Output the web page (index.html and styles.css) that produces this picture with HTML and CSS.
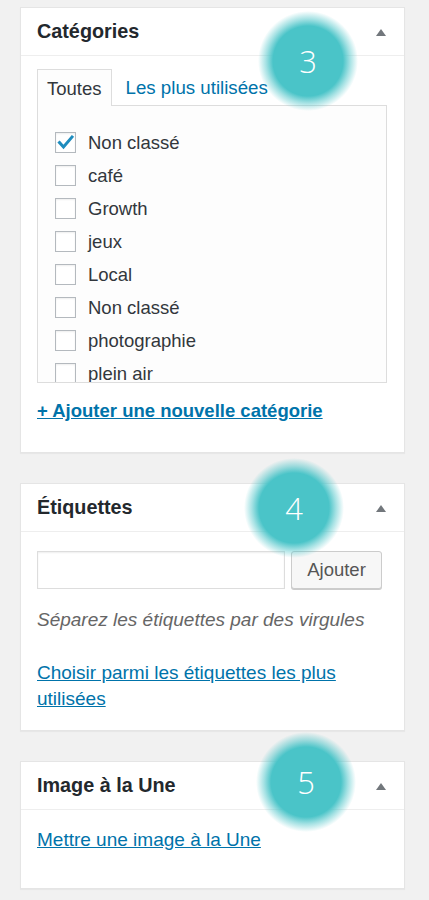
FILE: index.html
```html
<!DOCTYPE html>
<html lang="fr">
<head>
<meta charset="utf-8">
<link rel="stylesheet" href="styles.css">
</head>
<body>
<div class="postbox box-cat">
  <div class="hndle"><h2>Catégories</h2><span class="toggle"></span></div>
  <div class="inside inside-cat">
    <div class="tabs">
      <span class="tab active">Toutes</span>
      <span class="tab link">Les plus utilisées</span>
    </div>
    <div class="catlist">
      <ul>
        <li><span class="cb checked"><svg viewBox="0 0 21 21" width="21" height="21"><path d="M4.5 10.5 L8.5 15 L17 5" fill="none" stroke="#1e8cbe" stroke-width="3" stroke-linecap="square"/></svg></span>Non classé</li>
        <li><span class="cb"></span>café</li>
        <li><span class="cb"></span>Growth</li>
        <li><span class="cb"></span>jeux</li>
        <li><span class="cb"></span>Local</li>
        <li><span class="cb"></span>Non classé</li>
        <li><span class="cb"></span>photographie</li>
        <li><span class="cb"></span>plein air</li>
      </ul>
    </div>
    <a class="addlink" href="#">+ Ajouter une nouvelle catégorie</a>
  </div>
  <div class="bubble b3"><span>3</span></div>
</div>

<div class="postbox box-tags">
  <div class="hndle"><h2>Étiquettes</h2><span class="toggle"></span></div>
  <div class="inside inside-tags">
    <div class="tagform">
      <input class="taginput" type="text">
      <button class="btn" type="button">Ajouter</button>
    </div>
    <p class="howto">Séparez les étiquettes par des virgules</p>
    <a class="textlink" href="#">Choisir parmi les étiquettes les plus<br>utilisées</a>
  </div>
  <div class="bubble b4"><span>4</span></div>
</div>

<div class="postbox box-img">
  <div class="hndle"><h2>Image à la Une</h2><span class="toggle"></span></div>
  <div class="inside inside-img">
    <a class="textlink" href="#">Mettre une image à la Une</a>
  </div>
  <div class="bubble b5"><span>5</span></div>
</div>
</body>
</html>
```

FILE: styles.css
```css
* { box-sizing: border-box; }
html, body { margin: 0; padding: 0; }
body {
  background: #f1f1f1;
  font-family: "Liberation Sans", Arial, sans-serif;
  font-size: 18.5px;
  color: #32373c;
  padding: 7px 0 0 20px;
}
.postbox {
  position: relative;
  width: 385px;
  background: #fff;
  border: 1px solid #e5e5e5;
  box-shadow: 0 1px 1px rgba(0,0,0,0.04);
  margin-bottom: 30px;
}
.hndle {
  height: 48px;
  border-bottom: 1px solid #eee;
  display: flex;
  align-items: center;
  justify-content: space-between;
  padding: 0 18px 0 16px;
}
.hndle h2 {
  margin: 0;
  font-size: 19.8px;
  font-weight: bold;
  color: #23282d;
}
.toggle {
  width: 0; height: 0;
  border-left: 5.5px solid transparent;
  border-right: 5.5px solid transparent;
  border-bottom: 7px solid #72777c;
  margin-top: 1px;
}
.inside-cat { padding: 13px 17px 28px 16px; }
.tabs { display: flex; height: 36px; align-items: stretch; }
.tab { display: flex; align-items: center; line-height: 1; }
.tab.active {
  padding: 2px 9px 0 9px;
  border: 1px solid #ddd;
  border-bottom: none;
  background: #fdfdfd;
  color: #32373c;
  position: relative;
  z-index: 1;
  margin-bottom: -1px;
  height: 37px;
}
.tab.link { color: #0073aa; padding: 2px 0 0 14px; font-size: 18.7px; }
.catlist {
  height: 278px;
  border: 1px solid #ddd;
  background: #fdfdfd;
  overflow: hidden;
}
.catlist ul { list-style: none; margin: 0; padding: 20px 0 0 17px; }
.catlist li {
  display: flex;
  align-items: center;
  height: 33px;
  color: #32373c;
}
.cb {
  width: 21px; height: 21px;
  border: 1px solid #b4b9be;
  background: #fff;
  box-shadow: inset 0 1px 2px rgba(0,0,0,0.07);
  margin-right: 12px;
  flex: none;
  display: flex;
  align-items: center;
  justify-content: center;
}
.cb svg { display: block; margin: -1px; }
.addlink {
  display: block;
  margin-top: 15px;
  line-height: 26px;
  color: #0073aa;
  font-weight: bold;
  text-decoration: underline;
}
.inside-tags { padding: 19px 17px 18px 16px; }
.tagform { display: flex; align-items: flex-start; gap: 6px; }
.taginput {
  width: 248px; height: 38px;
  border: 1px solid #ddd;
  box-shadow: inset 0 1px 2px rgba(0,0,0,0.07);
  background: #fff;
  margin: 0;
  font: inherit;
}
.btn {
  width: 91px; height: 38px;
  background: #f7f7f7;
  border: 1px solid #ccc;
  border-radius: 3px;
  box-shadow: 0 1px 0 #ccc;
  color: #555;
  font: inherit;
  font-size: 18.5px;
  padding: 0;
  margin: 0;
}
.howto {
  margin: 18px 0 0 0;
  line-height: 26px;
  font-size: 19px;
  font-style: italic;
  color: #666;
}
.textlink {
  display: block;
  margin-top: 27px;
  line-height: 26px;
  font-size: 19px;
  color: #0073aa;
  text-decoration: underline;
}
.inside-img { padding: 17px 17px 35px 16px; }
.inside-img .textlink { margin-top: 0; }
.bubble {
  position: absolute;
  width: 100px; height: 100px;
  margin: -50px 0 0 -50px;
  border-radius: 50%;
  background: radial-gradient(circle closest-side, #4ac4c8 0, #4ac4c8 70%, rgba(74,196,200,0.5) 84%, rgba(74,196,200,0) 100%);
  display: flex;
  align-items: center;
  justify-content: center;
  z-index: 5;
}
.bubble span {
  color: #fff;
  font-family: "Open Sans", "Liberation Sans", sans-serif;
  font-weight: 300;
  font-size: 31px;
  line-height: 1;
}
.b3 { left: 287px; top: 53px; }
.b4 { left: 273px; top: 24px; }
.b5 { left: 285px; top: 20px; }
```
